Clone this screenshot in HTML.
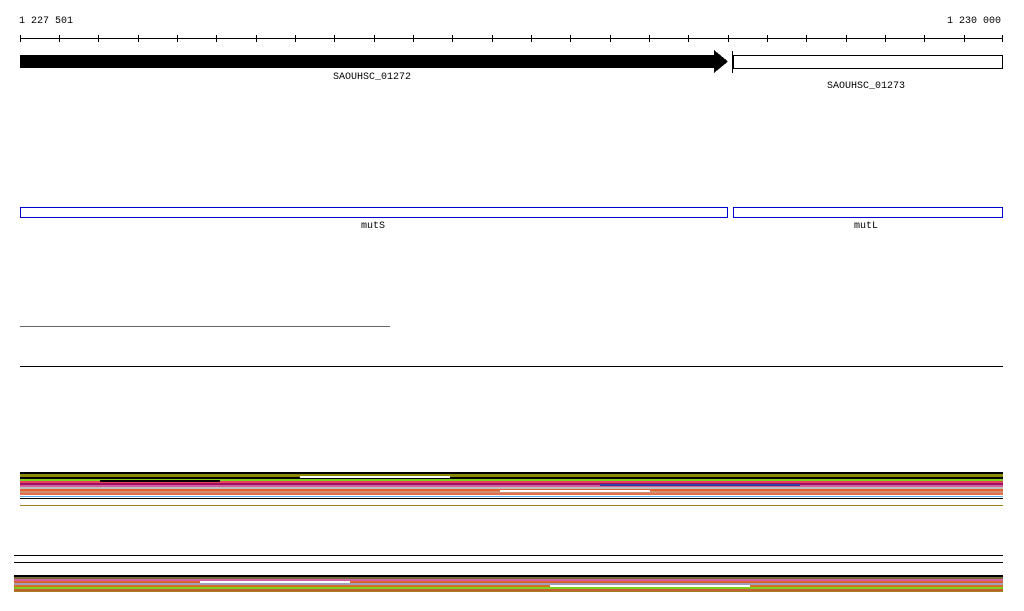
<!DOCTYPE html><html><head><style>body{margin:0;background:#fff}svg{display:block}text{font-family:"Liberation Mono",monospace;font-size:10px;fill:#000}</style></head><body>
<svg width="1024" height="611" xmlns="http://www.w3.org/2000/svg" shape-rendering="crispEdges">
<text x="19" y="23">1 227 501</text><text x="947" y="23">1 230 000</text>
<line x1="20" y1="38.5" x2="1003" y2="38.5" stroke="#000"/>
<g stroke="#000">
<path d="M20.5 35v7M59.5 35v7M98.5 35v7M138.5 35v7M177.5 35v7M216.5 35v7M256.5 35v7M295.5 35v7M334.5 35v7M374.5 35v7M413.5 35v7M452.5 35v7M492.5 35v7M531.5 35v7M570.5 35v7M610.5 35v7M649.5 35v7M688.5 35v7M728.5 35v7M767.5 35v7M806.5 35v7M846.5 35v7M885.5 35v7M924.5 35v7M964.5 35v7M1002.5 35v7"/>
</g>
<polygon points="20,55 714,55 714,50 728,61.5 714,73 714,68 20,68" fill="#000"/>
<text x="333" y="79">SAOUHSC_01272</text>
<rect x="733.5" y="55.5" width="269" height="13" fill="#fff" stroke="#000"/>
<line x1="732.5" y1="51" x2="732.5" y2="73" stroke="#000"/>
<text x="827" y="88">SAOUHSC_01273</text>
<rect x="20.5" y="207.5" width="707" height="10" fill="none" stroke="#00c"/>
<rect x="733.5" y="207.5" width="269" height="10" fill="none" stroke="#00c"/>
<text x="361" y="228">mutS</text><text x="854" y="228">mutL</text>
<line x1="20" y1="326.5" x2="390" y2="326.5" stroke="#666"/>
<line x1="20" y1="366.5" x2="1003" y2="366.5" stroke="#000"/>
<g>
<rect x="20" y="472" width="983" height="2" fill="#000"/>
<rect x="20" y="474" width="983" height="3" fill="#8a8a00"/>
<rect x="20" y="477" width="983" height="2" fill="#000"/>
<rect x="20" y="479" width="983" height="2" fill="#7fcf20"/>
<rect x="20" y="481" width="983" height="2" fill="#e84060"/>
<rect x="20" y="483" width="983" height="2" fill="#a01060"/>
<rect x="20" y="485" width="983" height="2" fill="#d060a0"/>
<rect x="20" y="487" width="983" height="2" fill="#c0c0c0"/>
<rect x="20" y="489" width="983" height="2" fill="#e06030"/>
<rect x="20" y="491" width="983" height="2" fill="#d09070"/>
<rect x="20" y="493" width="983" height="2" fill="#e07050"/>
<rect x="20" y="496" width="983" height="1" fill="#60b0f0"/>
<rect x="20" y="498" width="983" height="1" fill="#000"/>
<rect x="20" y="505" width="983" height="1" fill="#a08020"/>
<rect x="100" y="480" width="120" height="2" fill="#000"/>
<rect x="300" y="476" width="150" height="2" fill="#fff"/>
<rect x="600" y="484" width="200" height="2" fill="#3040a0"/>
<rect x="500" y="490" width="150" height="2" fill="#fff"/>
</g>
<line x1="14" y1="555.5" x2="1003" y2="555.5" stroke="#000"/>
<line x1="14" y1="562.5" x2="1003" y2="562.5" stroke="#000"/>
<g>
<rect x="14" y="575" width="989" height="2" fill="#000"/>
<rect x="14" y="577" width="989" height="2" fill="#7a6a40"/>
<rect x="14" y="579" width="989" height="2" fill="#d060a0"/>
<rect x="14" y="581" width="989" height="2" fill="#e06030"/>
<rect x="14" y="583" width="989" height="2" fill="#a0a0c0"/>
<rect x="14" y="585" width="989" height="2" fill="#d07020"/>
<rect x="14" y="587" width="989" height="2" fill="#7fcf20"/>
<rect x="14" y="589" width="989" height="2" fill="#c06030"/>
<rect x="14" y="591" width="989" height="1" fill="#a08020"/>
<rect x="200" y="581" width="150" height="2" fill="#fff"/>
<rect x="550" y="585" width="200" height="2" fill="#fff"/>
</g>
</svg></body></html>
